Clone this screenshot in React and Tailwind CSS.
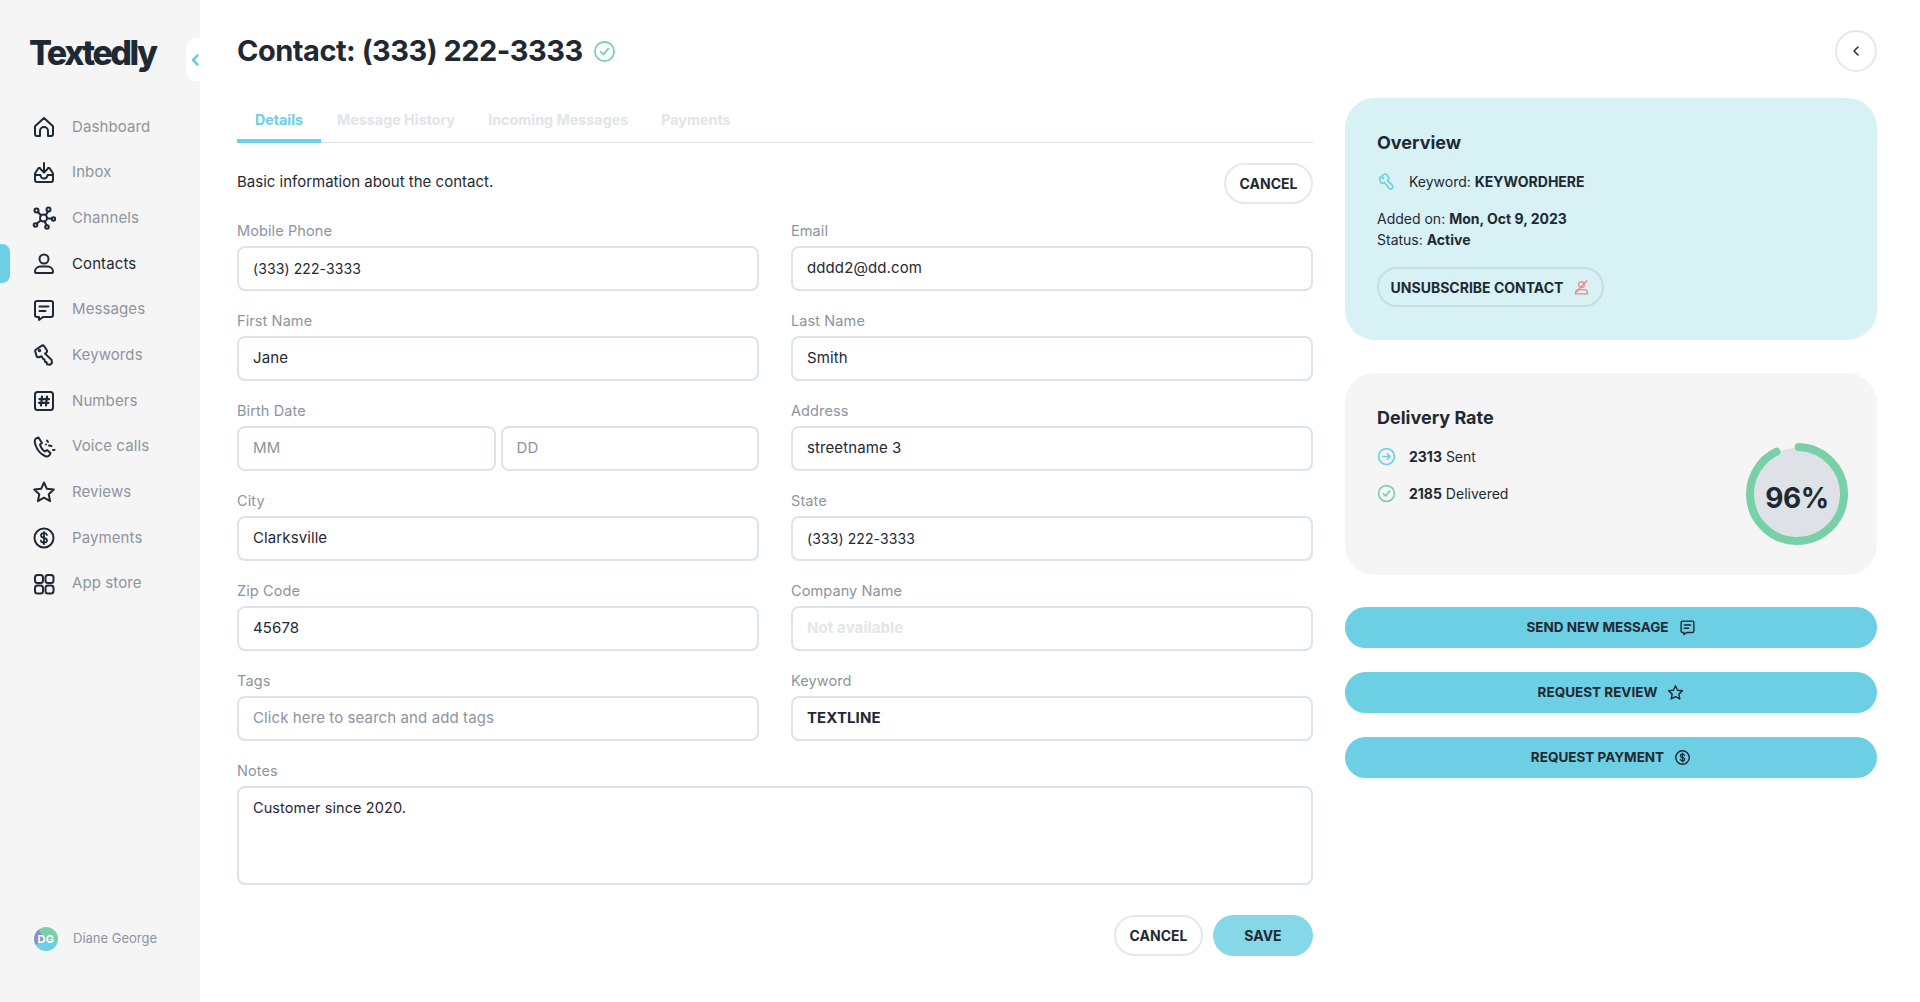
import React from "react";

const ink = "#1f2933";

function Ico({ size = 24, color = ink, sw = 2, children, className = "" }) {
  return (
    <svg width={size} height={size} viewBox="0 0 24 24" fill="none" stroke={color} strokeWidth={sw} strokeLinecap="round" strokeLinejoin="round" className={`shrink-0 ${className}`}>
      {children}
    </svg>
  );
}

const HomeIcon = (p) => (
  <Ico {...p}>
    <path d="M3 11.200 12 3l9 8.200V19a2 2 0 0 1-2 2h-3v-5a4 4 0 0 0-8 0v5H5a2 2 0 0 1-2-2z" />
  </Ico>
);
const InboxIcon = (p) => (
  <Ico {...p}>
    <path d="M8 7H6.500L3 12.500V19a2 2 0 0 0 2 2h14a2 2 0 0 0 2-2v-6.500L17.500 7H16" />
    <path d="M3 14h5.500a3.500 3.500 0 0 0 7 0H21" />
    <path d="M12 2v9M8.500 8l3.500 3.500L15.500 8" />
  </Ico>
);
const ChannelsIcon = (p) => (
  <Ico {...p}>
    <circle cx="4.500" cy="4.500" r="2" />
    <circle cx="16.500" cy="3.500" r="2" />
    <circle cx="21.500" cy="13" r="1.700" />
    <circle cx="3.500" cy="19" r="1.800" />
    <circle cx="15" cy="21" r="1.800" />
    <rect x="8" y="8.500" width="7" height="7" rx="3.500" />
    <path d="M6 6l3 3.500M15.800 5.500 14 9M15 12.500h5M8.600 14.500 5 17.500M12.500 15.500l2 3.500" />
  </Ico>
);
const UserIcon = (p) => (
  <Ico {...p}>
    <circle cx="12" cy="7" r="4.500" />
    <path d="M3 19.500C3 16 6 14.500 9 14.500h6c3 0 6 1.500 6 5v.5a1 1 0 0 1-1 1H4a1 1 0 0 1-1-1z" />
  </Ico>
);
const MessageIcon = (p) => (
  <Ico {...p}>
    <path d="M5 3h14a2 2 0 0 1 2 2v12a2 2 0 0 1-2 2h-8l-4 3v-3H5a2 2 0 0 1-2-2V5a2 2 0 0 1 2-2z" />
    <path d="M7.500 8.500h9M7.500 13h6" />
  </Ico>
);
const KeyIcon = (p) => (
  <Ico {...p}>
    <path d="M4 6.500 9.500 2.800a2 2 0 0 1 2.700.5l2.500 3.700a2 2 0 0 1-.5 2.800l-1.200.8 6.500 6.200.5 3.200-2 1.700-3-.5-.5-2-1.500-.5-.5-2-1.500-1-1.500-2.500-2.500 1a2 2 0 0 1-2.300-.8L3.500 9.300a2 2 0 0 1 .5-2.800z" />
    <circle cx="7.500" cy="7.500" r=".8" />
  </Ico>
);
const HashIcon = (p) => (
  <Ico {...p}>
    <rect x="3" y="3" width="18" height="18" rx="2.500" />
    <path d="M10 7.500 9 16.500M15 7.500l-1 9M7.500 10.200h9.500M7 13.800h9.500" strokeWidth="2.200" />
  </Ico>
);
const PhoneIcon = (p) => (
  <Ico {...p}>
    <path d="M6.500 2.500 4 3.500C2.500 4.500 2.500 7 3.500 10c1.500 4.500 5 9 9.500 11 2 .8 3.500.5 4.500-1l1-2-3.500-3-2 1.500c-2-1-4.500-4.500-5-7l2-1.500z" />
    <path d="M14 9.500v.01M15 5.500l1 1.500M19.500 11l-2.500-.5M21 15h1.500" />
  </Ico>
);
const StarIcon = (p) => (
  <Ico {...p}>
    <path d="m12 2.500 2.900 6.300 6.900.8-5.100 4.700 1.400 6.800L12 17.700 5.900 21.100l1.400-6.800L2.200 9.600l6.900-.8z" />
  </Ico>
);
const DollarIcon = (p) => (
  <Ico {...p}>
    <circle cx="12" cy="12" r="9.500" />
    <path d="M15 9c-.4-1.200-1.600-1.800-3-1.800-1.700 0-3 .8-3 2.300 0 3.200 6 1.600 6 4.800 0 1.500-1.300 2.400-3 2.400-1.500 0-2.700-.7-3.100-2M12 5.800v12.400" strokeWidth="1.800" />
  </Ico>
);
const GridIcon = (p) => (
  <Ico {...p}>
    <rect x="3" y="3" width="8" height="8" rx="2.500" />
    <rect x="13.500" y="3" width="8" height="8" rx="2.500" />
    <rect x="3" y="13.500" width="8" height="8" rx="2.500" />
    <rect x="13.500" y="13.500" width="8" height="8" rx="2.500" />
  </Ico>
);
const CheckCircle = (p) => (
  <Ico {...p}>
    <circle cx="12" cy="12" r="10" />
    <path d="m8 12.300 3 2.700 5-6" />
  </Ico>
);
const ArrowCircle = (p) => (
  <Ico {...p}>
    <circle cx="12" cy="12" r="10" />
    <path d="M7.500 12h9M13 8.500l3.500 3.500-3.500 3.500" />
  </Ico>
);
const UnsubIcon = (p) => (
  <Ico {...p}>
    <circle cx="12" cy="8" r="4" />
    <path d="M3.500 21v-1.500c0-3 2.500-4.500 5-4.500h7c2.500 0 5 1.500 5 4.500V21z" />
    <path d="M19.500 2.500 5 18" />
  </Ico>
);

const nav = [
  ["Dashboard", HomeIcon],
  ["Inbox", InboxIcon],
  ["Channels", ChannelsIcon],
  ["Contacts", UserIcon, true],
  ["Messages", MessageIcon],
  ["Keywords", KeyIcon],
  ["Numbers", HashIcon],
  ["Voice calls", PhoneIcon],
  ["Reviews", StarIcon],
  ["Payments", DollarIcon],
  ["App store", GridIcon],
];

function Sidebar() {
  return (
    <aside className="relative w-[200px] shrink-0 bg-[#f5f5f5] flex flex-col">
      <div className="absolute right-0 top-[38px] w-[14px] h-[43px] bg-white rounded-l-[10px] flex items-center justify-end">
        <svg width="12" height="14" viewBox="0 0 12 14" fill="none" stroke="#6dcfe3" strokeWidth="2.600" strokeLinecap="round" strokeLinejoin="round"><path d="M9.500 2.500 5 7l4.500 4.500" /></svg>
      </div>
      <div className="pl-[29px] pt-[30px] h-[104px] text-[34px] leading-[46px] font-extrabold tracking-[-2.500px] text-[#1f2933]">Textedly</div>
      <nav className="flex flex-col">
        {nav.map(([label, Icon, active]) => (
          <div key={label} className="flex items-center h-[45.700px]">
            <div className={`w-[10px] h-[39px] rounded-r-[8px] ${active ? "bg-[#6dcfe3]" : ""}`} />
            <div className="ml-[22px] w-[24px] flex justify-center"><Icon size={24} /></div>
            <span className={`ml-[16px] text-[15px] tracking-[0.100px] ${active ? "text-[#1f2933]" : "text-[#8d949e]"}`}>{label}</span>
          </div>
        ))}
      </nav>
      <div className="mt-auto mb-[51px] ml-[34px] flex items-center gap-[15px]">
        <div className="w-[24px] h-[24px] rounded-full bg-[conic-gradient(#78d0a9_0deg_100deg,#6dcfe3_100deg_240deg,#8494c8_240deg_320deg,#78d0a9_320deg)] flex items-center justify-center text-white text-[11px] font-bold tracking-[0.300px]">DG</div>
        <span className="text-[13px] text-[#8d949e]">Diane George</span>
      </div>
    </aside>
  );
}

function Field({ label, value, placeholder, bold, faint, tight }) {
  return (
    <div className="flex flex-col">
      <label className="h-[24px] text-[14.500px] leading-[18px] text-[#8d949e] tracking-[0.100px]">{label}</label>
      <Box value={value} placeholder={placeholder} bold={bold} faint={faint} tight={tight} />
    </div>
  );
}

function Box({ value, placeholder, bold, faint, tight }) {
  return (
    <div className={`h-[45px] border-2 border-[#dfe3e8] rounded-[8px] px-[14px] flex items-center tracking-[0.100px] ${tight ? "text-[14px]" : "text-[15px]"} ${bold ? "font-bold text-[#1f2933]" : ""} ${faint ? "font-bold text-[#e3e6ea]" : ""} ${placeholder ? "text-[#8d949e]" : "text-[#1f2933]"}`}>
      {value || placeholder}
    </div>
  );
}

function ActionButton({ label, Icon }) {
  return (
    <button className="h-[41px] rounded-full bg-[#6dcfe3] flex items-center justify-center gap-[10px] text-[13.500px] font-bold text-[#1f2933]">
      {label}
      <Icon size={17} />
    </button>
  );
}

function ContactForm() {
  return (
    <div className="w-[1076px]">
      <div className="h-[45px] border-b border-[#dfe3e8] flex text-[14.300px] font-bold text-[#e1e4e8]">
        <div className="w-[84px] h-[45px] border-b-4 border-[#6dcfe3] text-[#6dcfe3] flex items-start justify-center pt-[11px]">Details</div>
        <div className="ml-[16px] pt-[11px]">Message History</div>
        <div className="ml-[33px] pt-[11px]">Incoming Messages</div>
        <div className="ml-[33px] pt-[11px]">Payments</div>
      </div>
      <div className="mt-[20px] h-[41px] flex items-start justify-between">
        <p className="pt-[9px] text-[15px] leading-[20px] text-[#1f2933]">Basic information about the contact.</p>
        <button className="w-[89px] h-[41px] rounded-full border-2 border-[#e8e8e8] text-[14px] font-bold text-[#1f2933]">CANCEL</button>
      </div>
      <div className="mt-[18px] grid grid-cols-2 gap-x-[32px] gap-y-[21px]">
        <Field label="Mobile Phone" value="(333) 222-3333" tight />
        <Field label="Email" value="dddd2@dd.com" />
        <Field label="First Name" value="Jane" />
        <Field label="Last Name" value="Smith" />
        <div className="flex flex-col">
          <label className="h-[24px] text-[14.500px] leading-[18px] text-[#8d949e] tracking-[0.100px]">Birth Date</label>
          <div className="grid grid-cols-2 gap-[5px]">
            <Box placeholder="MM" />
            <Box placeholder="DD" />
          </div>
        </div>
        <Field label="Address" value="streetname 3" />
        <Field label="City" value="Clarksville" />
        <Field label="State" value="(333) 222-3333" tight />
        <Field label="Zip Code" value="45678" />
        <Field label="Company Name" value="Not available" faint />
        <Field label="Tags" placeholder="Click here to search and add tags" />
        <Field label="Keyword" value="TEXTLINE" bold />
      </div>
      <div className="mt-[21px]">
        <label className="block h-[24px] text-[14.500px] leading-[18px] text-[#8d949e] tracking-[0.100px]">Notes</label>
        <div className="h-[99px] border-2 border-[#dfe3e8] rounded-[8px] px-[14px] py-[10px] text-[14.500px] leading-[20px] tracking-[0.100px] text-[#1f2933]">Customer since 2020.</div>
      </div>
      <div className="mt-[30px] flex justify-end gap-[10px]">
        <button className="w-[89px] h-[41px] rounded-full border-2 border-[#e8e8e8] text-[14px] font-bold text-[#1f2933]">CANCEL</button>
        <button className="w-[100px] h-[41px] rounded-full bg-[#86d8e9] text-[14px] font-bold text-[#1f2933]">SAVE</button>
      </div>
    </div>
  );
}

function SidePanel() {
  return (
    <div className="w-[532px] flex flex-col text-[14px] text-[#1f2933]">
      <section className="h-[242px] rounded-[30px] bg-[#d7f1f5] px-[32px] pt-[32px]">
        <h2 className="text-[18px] leading-[26px] font-bold">Overview</h2>
        <div className="mt-[13px] h-[24px] flex items-center">
          <KeyIcon size={19} color="#6dcfe3" sw={2} />
          <span className="ml-[13px]">Keyword: <b className="font-bold">KEYWORDHERE</b></span>
        </div>
        <p className="mt-[15px] leading-[21px]">Added on: <b className="font-bold">Mon, Oct 9, 2023</b></p>
        <p className="leading-[21px]">Status: <b className="font-bold">Active</b></p>
        <button className="mt-[17px] w-[227px] h-[40px] rounded-full border-2 border-[#c3dfe4] flex items-center justify-center gap-[10px] text-[14px] font-bold">
          UNSUBSCRIBE CONTACT
          <UnsubIcon size={17} color="#ef8585" sw={1.800} />
        </button>
      </section>
      <section className="mt-[33px] h-[202px] rounded-[30px] bg-[#f5f5f5] pl-[32px] pr-[28px] flex justify-between items-start">
        <div className="pt-[33px]">
          <h2 className="text-[18px] leading-[24px] font-bold">Delivery Rate</h2>
          <div className="mt-[14px] h-[24px] flex items-center">
            <ArrowCircle size={19} color="#6dcfe3" />
            <span className="ml-[13px]"><b className="font-bold">2313</b> Sent</span>
          </div>
          <div className="mt-[13px] h-[24px] flex items-center">
            <CheckCircle size={19} color="#78d0a9" />
            <span className="ml-[13px]"><b className="font-bold">2185</b> Delivered</span>
          </div>
        </div>
        <div className="relative mt-[69px] w-[104px] h-[104px] flex items-center justify-center">
          <svg width="104" height="104" viewBox="0 0 104 104" className="absolute inset-0">
            <circle cx="52" cy="52" r="46" fill="#dee1e6" />
            <circle cx="52" cy="52" r="47" fill="none" stroke="#78d0a9" strokeWidth="8" strokeLinecap="round" strokeDasharray="272 295.300" transform="rotate(-88 52 52)" />
          </svg>
          <span className="relative pt-[7px] text-[28px] font-bold tracking-[-0.500px]">96%</span>
        </div>
      </section>
      <div className="mt-[32px] flex flex-col gap-[24px]">
        <ActionButton label="SEND NEW MESSAGE" Icon={MessageIcon} />
        <ActionButton label="REQUEST REVIEW" Icon={StarIcon} />
        <ActionButton label="REQUEST PAYMENT" Icon={DollarIcon} />
      </div>
    </div>
  );
}

export default function App() {
  return (
    <div className="flex h-[1002px] bg-white overflow-hidden font-['Inter','Liberation_Sans',sans-serif]">
      <Sidebar />
      <main className="flex-1 pl-[37px] pr-[43px]">
        <header className="h-[98px] flex justify-between items-start">
          <div className="h-[102px] flex items-center gap-[10px]">
            <h1 className="text-[29px] font-bold tracking-[-0.500px] text-[#1f2933]">Contact: (333) 222-3333</h1>
            <CheckCircle size={23} color="#78d0a9" sw={1.800} />
          </div>
          <button className="mt-[30px] w-[42px] h-[42px] rounded-full border-2 border-[#e8e8e8] flex items-center justify-center">
            <svg width="10" height="12" viewBox="0 0 10 12" fill="none" stroke={ink} strokeWidth="1.500" strokeLinecap="round" strokeLinejoin="round"><path d="M7 2 3 6l4 4" /></svg>
          </button>
        </header>
        <div className="flex gap-[32px]">
          <ContactForm />
          <SidePanel />
        </div>
      </main>
    </div>
  );
}
